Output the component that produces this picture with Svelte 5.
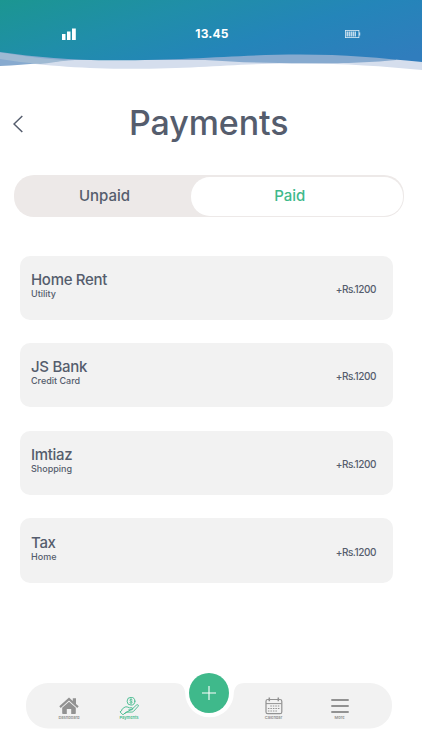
<script>
    let tab = $state("Paid");

    const tabs = ["Unpaid", "Paid"];
    const payments = [
        { name: "Home Rent", kind: "Utility", amount: "+Rs.1200" },
        { name: "JS Bank", kind: "Credit Card", amount: "+Rs.1200" },
        { name: "Imtiaz", kind: "Shopping", amount: "+Rs.1200" },
        { name: "Tax", kind: "Home", amount: "+Rs.1200" },
    ];
</script>

<div class="screen">
    <header>
        <svg class="waves" viewBox="0 0 422 72" width="422" height="72">
            <defs>
                <linearGradient id="sea" gradientUnits="userSpaceOnUse" x1="0" y1="0" x2="50" y2="165">
                    <stop offset="0" stop-color="#1b9691" />
                    <stop offset="0.35" stop-color="#208ea9" />
                    <stop offset="0.65" stop-color="#2485b9" />
                    <stop offset="1" stop-color="#307dbd" />
                </linearGradient>
            </defs>
            <path fill="#d5deed" d="M0 40V60C50 66 85 68.800 130 68.800C200 68.800 230 64 290 63.500C340 63 380 66 422 70V40Z" />
            <path fill="#87aacf" d="M0 40V66C30 65 50 61 75 60L205 60C240 62.500 270 63.300 305 63.300C345 63.300 365 63 396 60V40Z" />
            <path fill="#9fbad3" d="M0 52.500C24 56 45 59 68 60.500C58 61.500 50 63 40 64Q20 62.500 0 59Z" />
            <path fill="url(#sea)" d="M0 0V52C35 57 70 60.300 115 60.300C190 60.300 240 54.500 300 54.500C345 54.500 380 58 422 62V0Z" />
        </svg>
        <div class="status">
            <svg class="signal" viewBox="0 0 14 12" width="14" height="12" fill="#fff">
                <rect x="0" y="6" width="3.500" height="6" />
                <rect x="5" y="3.500" width="3.500" height="8.500" />
                <rect x="10" y="0.500" width="3.800" height="11.500" />
            </svg>
            <span class="time">13.45</span>
            <svg class="battery" viewBox="0 0 16 8" width="16" height="8">
                <rect x="0.400" y="0.400" width="13.500" height="7.200" fill="none" stroke="#dcebf5" stroke-width="0.800" />
                <path d="M2.200 1.500v5M4.200 1.500v5M6.200 1.500v5M8.200 1.500v5M10.200 1.500v5" stroke="#e8f2f9" stroke-width="1.200" />
                <path d="M14.700 2.400v3.200" stroke="#dcebf5" stroke-width="1" />
            </svg>
        </div>
    </header>

    <div class="heading">
        <button class="back" aria-label="Back">
            <svg viewBox="0 0 10 18" width="10" height="18" fill="none" stroke="#555d6d" stroke-width="1.500">
                <path d="M9.300 1L1 9L9.300 17" />
            </svg>
        </button>
        <h1>Payments</h1>
    </div>

    <div class="tabs">
        {#each tabs as name}
            <button class="tab" class:active={tab === name} onclick={() => (tab = name)}>
                <span>{name}</span>
            </button>
        {/each}
    </div>

    <main>
        {#each payments as payment}
            <div class="card">
                <div>
                    <div class="name">{payment.name}</div>
                    <div class="kind">{payment.kind}</div>
                </div>
                <div class="amount">{payment.amount}</div>
            </div>
        {/each}
    </main>

    <nav>
        <svg class="bar" viewBox="0 0 366 46" width="366" height="46">
            <path fill="#f2f2f2" d="M22 0H148C156 0 158.500 4 159.200 10A24.300 24.300 0 0 0 207.800 10C208.500 4 211 0 219 0H344A22 22 0 0 1 366 22V23.500A22 22 0 0 1 344 45.500H22A22 22 0 0 1 0 23.500V22A22 22 0 0 1 22 0Z" />
        </svg>
        <a class="item" href="#dashboard">
            <svg viewBox="0 0 20 18" width="20" height="18" fill="#929292">
                <path d="M10 4.800L3.200 10.800V16.200Q3.200 17 4 17H7.800V12H12.200V17H16Q16.800 17 16.800 16.200V10.800Z" />
                <path d="M10 0.600L13.800 4V1.300H17V6.900L19.700 9.300L18.300 10.900L10 3.600L1.700 10.900L0.300 9.300Z" />
            </svg>
            <span>Dashboard</span>
        </a>
        <a class="item current" href="#payments">
            <svg viewBox="0 0 20 18" width="20" height="18" fill="none" stroke="#3fb98b" stroke-width="0.900" stroke-linejoin="round" stroke-linecap="round">
                <circle cx="12" cy="4.200" r="3.900" />
                <path stroke-width="0.700" d="M13.300 2.800Q12.800 2.300 12 2.300Q10.800 2.300 10.800 3.200Q10.800 4 12 4.200Q13.300 4.400 13.300 5.200Q13.300 6.100 12 6.100Q11.100 6.100 10.700 5.500M12 1.500V7" />
                <path d="M3 13.300L1 14.900L4 17.900L5.500 16.400M2.500 12.900L5 10.600Q6.800 9.200 8.800 10.100L10.500 10.800H13Q14.200 11.200 13.600 12.300Q13.300 12.800 12.500 12.800H9.800M14 11.300L17.300 8.200Q18.500 7.300 19.200 8Q19.700 8.700 18.900 9.600L14.500 14.400Q13.700 15.100 12.500 15.100H7.500L5.500 16.500Z" />
            </svg>
            <span>Payments</span>
        </a>
        <button class="add" aria-label="Add">
            <svg viewBox="0 0 14 14" width="14" height="14" stroke="#fff" stroke-width="1.100">
                <path d="M7 0V14M0 7H14" />
            </svg>
        </button>
        <a class="item" href="#calendar">
            <svg viewBox="0 0 18 18" width="18" height="18" fill="none" stroke="#929292">
                <rect x="1" y="2.500" width="15.800" height="14.200" rx="1.800" stroke-width="1.200" />
                <path d="M1 6.600H16.600" />
                <path stroke-width="1.500" d="M4.300 0.500V4.200M13.300 0.500V4.200" />
                <path stroke-width="1.100" stroke-dasharray="1.500 1" d="M5.300 9H14.800M2.900 11.500H14.800M2.900 14H12.300" />
            </svg>
            <span>Calendar</span>
        </a>
        <a class="item" href="#more">
            <svg viewBox="0 0 18 18" width="18" height="18" stroke="#929292" stroke-width="2">
                <path d="M0.300 3H17.700M0.300 9H17.700M0.300 15H17.700" />
            </svg>
            <span>More</span>
        </a>
    </nav>
</div>

<style>
    :global(body) {
        margin: 0;
        background: #fff;
    }
    .screen {
        width: 422px;
        height: 750px;
        display: flex;
        flex-direction: column;
        overflow: hidden;
        background: #fff;
        color: #555d6d;
        font-family: Inter, "Liberation Sans", sans-serif;
        font-weight: 500;
    }
    button {
        border: 0;
        padding: 0;
        background: none;
        color: inherit;
        font: inherit;
        cursor: pointer;
    }
    svg {
        display: block;
    }
    header {
        position: relative;
        height: 72px;
    }
    .waves {
        position: absolute;
        top: 0;
        left: 0;
    }
    .status {
        position: relative;
        display: grid;
        grid-template-columns: 62px 100px 100px 83px 1fr;
        align-items: center;
        height: 68px;
    }
    .signal {
        grid-column: 2;
    }
    .time {
        grid-column: 3;
        justify-self: center;
        padding-bottom: 2px;
        color: #fff;
        font-size: 12px;
        font-weight: 700;
        letter-spacing: 0.2px;
    }
    .battery {
        grid-column: 5;
    }
    .heading {
        display: grid;
        grid-template-columns: 129px 1fr;
        align-items: center;
        height: 103px;
    }
    .back {
        margin-left: 13px;
        justify-self: start;
    }
    h1 {
        margin: 0 0 2px;
        font-size: 34px;
        font-weight: 500;
        line-height: 40px;
        letter-spacing: -0.1px;
    }
    .tabs {
        display: grid;
        grid-template-columns: 177px 1fr;
        box-sizing: border-box;
        width: 390px;
        height: 42px;
        margin-left: 14px;
        padding: 1.5px 1.5px 1.5px 0;
        border-radius: 20px;
        background: #ede9e8;
        font-size: 15px;
    }
    .tab {
        border-radius: 19px;
        padding: 0 0 2px 4px;
    }
    .tab.active {
        background: #fff;
        color: #3fb98b;
        padding: 0 14px 2px 0;
    }
    main {
        display: flex;
        flex-direction: column;
        gap: 23.3px;
        padding: 38.5px 29px 0 20px;
    }
    .card {
        display: flex;
        justify-content: space-between;
        box-sizing: border-box;
        height: 64.3px;
        padding: 15.3px 17px 0 11px;
        border-radius: 10px;
        background: #f2f2f2;
    }
    .name {
        font-size: 15px;
        line-height: 18px;
        letter-spacing: -0.3px;
    }
    .kind {
        font-size: 9px;
        line-height: 9.5px;
    }
    .amount {
        padding-top: 11px;
        font-size: 10px;
        line-height: 14px;
        letter-spacing: -0.45px;
    }
    nav {
        position: relative;
        display: grid;
        grid-template-columns: 87px 33px 86px 84px 48px;
        width: 366px;
        height: 46px;
        margin: auto 0 21px 25.5px;
    }
    .bar {
        position: absolute;
        top: 0;
        left: 0;
    }
    .item {
        position: relative;
        display: flex;
        flex-direction: column;
        align-items: center;
        gap: 0.5px;
        padding-top: 13.5px;
        color: #8d8d8d;
        font-size: 4px;
        font-weight: 600;
        line-height: 5px;
        text-decoration: none;
    }
    .current {
        color: #3fb98b;
    }
    .add {
        position: relative;
        display: grid;
        place-items: center;
        width: 40px;
        height: 40px;
        margin: -10px 0 0 43.5px;
        border-radius: 50%;
        background: #3fb98b;
    }
</style>
